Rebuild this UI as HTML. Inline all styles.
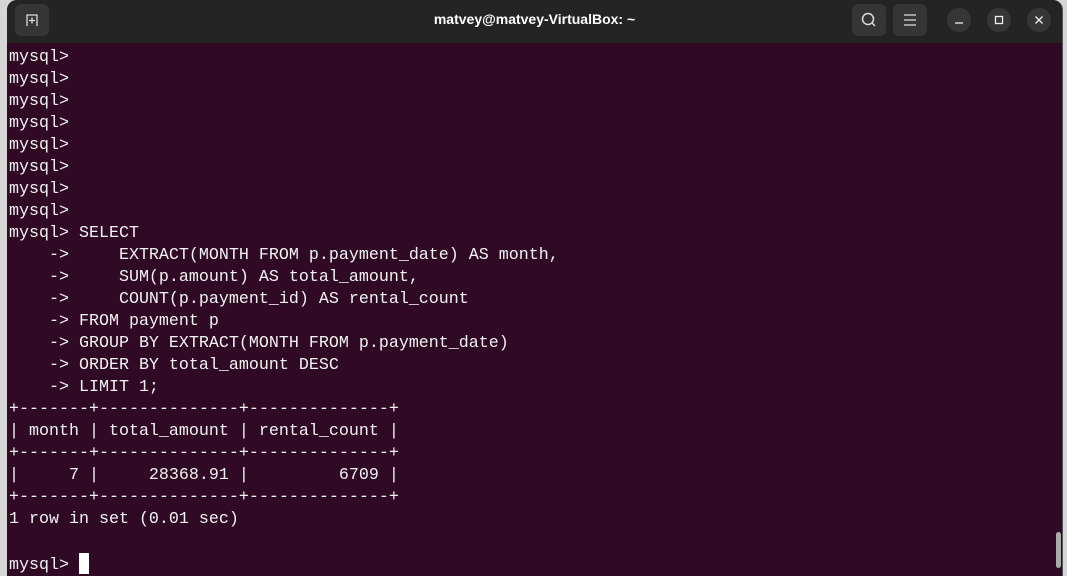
<!DOCTYPE html>
<html><head><meta charset="utf-8"><style>
html,body{margin:0;padding:0;width:1067px;height:576px;overflow:hidden;background:#d6d6d6;}
.win{position:absolute;left:7px;top:0;width:1055px;height:576px;background:#300a24;border-radius:10px 10px 0 0;overflow:hidden;border-right:1px solid #555;}
.bar{position:absolute;left:0;top:0;width:100%;height:43px;background:#242424;}
.title{position:absolute;left:0;right:0;top:11px;text-align:center;color:#fff;font:bold 14px "Liberation Sans",sans-serif;}
.btn{position:absolute;top:4px;width:34px;height:32px;background:#353535;border-radius:6px;}
.cir{position:absolute;top:8px;width:24px;height:24px;background:#363636;border-radius:50%;}
pre{position:absolute;left:2px;top:47px;margin:0;font:16.67px/22px "Liberation Mono",monospace;color:#f2f2f2;}
.cur{display:inline-block;width:10px;height:21px;background:#fff;vertical-align:-5px;}
.sb{position:absolute;right:1px;top:532px;width:5px;height:36px;background:#aaa;border-radius:3px;}
</style></head><body>
<div class="win">
<div class="bar">
<div class="btn" style="left:8px;"><svg width="34" height="32"><path d="M12 22V11h10v11M17 13.5v6M14 16.5h6" stroke="#ddd" stroke-width="1.3" fill="none"/></svg></div>
<div class="title">matvey@matvey-VirtualBox: ~</div>
<div class="btn" style="left:845px;"><svg width="34" height="32"><circle cx="16" cy="15" r="5.5" stroke="#ddd" stroke-width="1.5" fill="none"/><path d="M20 19l3 3" stroke="#ddd" stroke-width="1.5"/></svg></div>
<div class="btn" style="left:886px;"><svg width="34" height="32"><path d="M11 11h12M11 16h12M11 21h12" stroke="#ddd" stroke-width="1.3"/></svg></div>
<div class="cir" style="left:940px;"><svg width="24" height="24"><path d="M8 15h8" stroke="#eee" stroke-width="1.3"/></svg></div>
<div class="cir" style="left:980px;"><svg width="24" height="24"><rect x="8.5" y="8.5" width="7" height="7" stroke="#eee" stroke-width="1.3" fill="none"/></svg></div>
<div class="cir" style="left:1020px;"><svg width="24" height="24"><path d="M8.5 8.5l7 7M15.5 8.5l-7 7" stroke="#eee" stroke-width="1.3"/></svg></div>
</div>
<pre>mysql>
mysql>
mysql>
mysql>
mysql>
mysql>
mysql>
mysql>
mysql> SELECT
    ->     EXTRACT(MONTH FROM p.payment_date) AS month,
    ->     SUM(p.amount) AS total_amount,
    ->     COUNT(p.payment_id) AS rental_count
    -> FROM payment p
    -> GROUP BY EXTRACT(MONTH FROM p.payment_date)
    -> ORDER BY total_amount DESC
    -> LIMIT 1;
+-------+--------------+--------------+
| month | total_amount | rental_count |
+-------+--------------+--------------+
|     7 |     28368.91 |         6709 |
+-------+--------------+--------------+
1 row in set (0.01 sec)

mysql> <span class="cur"></span></pre>
<div class="sb"></div>
</div>
</body></html>
